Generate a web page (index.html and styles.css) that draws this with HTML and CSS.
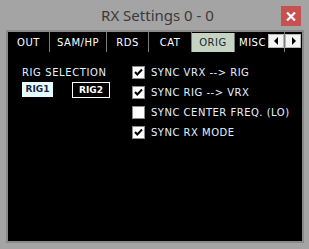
FILE: index.html
```html
<!DOCTYPE html>
<html>
<head>
    <title>RX Settings</title>
    <link rel="stylesheet" href="styles.css">
</head>
<body>
    <div class="window">
        <div class="titlebar">
            <span></span>
            <div class="title">RX Settings 0 - 0</div>
            <div class="close">
                <svg width="10" height="9" viewBox="0 0 10 9">
                    <path d="M1 0.5 L9 8.5 M9 0.5 L1 8.5" stroke="#fff" stroke-width="2.2"/>
                </svg>
            </div>
        </div>

        <div class="frame">
            <div class="tabs">
                <div class="tab t-out">OUT</div>
                <div class="tab t-sam">SAM/HP</div>
                <div class="tab t-rds">RDS</div>
                <div class="tab t-cat">CAT</div>
                <div class="tab t-orig active">ORIG</div>
                <div class="tab t-misc">MISC</div>

                <!-- tab scroll arrows -->
                <div class="scroller">
                    <div class="arrow">
                        <svg width="5" height="8" viewBox="0 0 5 8"><path d="M4 0 L0 4 L4 8 Z" fill="#000"/></svg>
                    </div>
                    <div class="arrow">
                        <svg width="5" height="8" viewBox="0 0 5 8"><path d="M1 0 L5 4 L1 8 Z" fill="#000"/></svg>
                    </div>
                </div>
            </div>

            <div class="panel">
                <div class="rig-col">
                    <div class="label">RIG SELECTION</div>
                    <div class="rigs">
                        <div class="rig on">RIG1</div>
                        <div class="rig">RIG2</div>
                    </div>
                </div>

                <ul class="syncs">
                    <li><span class="box checked"></span>SYNC VRX --&gt; RIG</li>
                    <li><span class="box checked"></span>SYNC RIG --&gt; VRX</li>
                    <li><span class="box"></span>SYNC CENTER FREQ. (LO)</li>
                    <li><span class="box checked"></span>SYNC RX MODE</li>
                </ul>
            </div>
        </div>
    </div>
</body>
</html>
```

FILE: styles.css
```css
body {
    margin: 0;
    padding: 0;
    background-color: #a4a4a4;
    font-family: "DejaVu Sans", Verdana, sans-serif;
}

.window {
    width: 309px;
    height: 249px;
    overflow: hidden;
}

.titlebar {
    height: 30px;
    display: grid;
    grid-template-columns: 1fr auto 1fr;
    align-items: start;
}

.title {
    font-family: "Noto Sans", "Open Sans", sans-serif;
    font-size: 15px;
    color: #3a3a3a;
    padding-top: 5px;
    padding-left: 6px;
}

.close {
    justify-self: end;
    width: 20px;
    height: 20px;
    margin-top: 6px;
    margin-right: 8px;
    background-color: #c75050;
    display: flex;
    justify-content: center;
    align-items: center;
}

.frame {
    margin-left: 6px;
    width: 294px;
    height: 209px;
    border: 2px solid #8a8a8a;
    background-color: #000;
}

.tabs {
    position: relative;
    display: flex;
    height: 20px;
    overflow: hidden;
}

.tab {
    flex: none;
    box-sizing: border-box;
    height: 20px;
    border-right: 1px solid #7c7c7c;
    color: #fff;
    font-size: 10px;
    letter-spacing: 0.5px;
    line-height: 21px;
    text-align: center;
}

.t-out { width: 42px; }
.t-sam { width: 57px; }
.t-rds { width: 42px; }
.t-cat { width: 43px; }
.t-orig { width: 43px; }
.t-misc { width: 50px; text-align: left; padding-left: 4px; }

.tab.active {
    background-color: #c3d4c3;
    color: #1e2430;
    margin-top: 1px;
    height: 19px;
    line-height: 19px;
}

.scroller {
    position: absolute;
    right: 1px;
    top: 2px;
    display: flex;
    gap: 1px;
}

.arrow {
    width: 14px;
    height: 12px;
    background-color: #f4f4f4;
    border: 1px solid #b8b8b8;
    display: flex;
    justify-content: center;
    align-items: center;
}

.panel {
    display: flex;
    padding: 14px 0 0 14px;
}

.rig-col {
    width: 110px;
}

.label {
    color: #e4f2ff;
    font-size: 10px;
    letter-spacing: 0.6px;
    line-height: 12px;
    margin-top: 1px;
}

.rigs {
    display: flex;
    align-items: flex-start;
    gap: 19px;
    margin-top: 3px;
}

.rig {
    box-sizing: border-box;
    width: 38px;
    height: 16px;
    font-size: 9px;
    font-weight: bold;
    line-height: 14px;
    text-align: center;
    color: #fff;
    border: 1px solid #fff;
}

.rig.on {
    width: 31px;
    height: 15px;
    line-height: 15px;
    border: none;
    background-color: #e6fdff;
    color: #1a2440;
}

.syncs {
    list-style: none;
    margin: 0;
    padding: 0;
    display: flex;
    flex-direction: column;
    gap: 7px;
}

.syncs li {
    display: flex;
    align-items: center;
    gap: 6px;
    height: 13px;
    color: #e4f2ff;
    font-size: 10px;
    letter-spacing: 0.5px;
}

.box {
    box-sizing: border-box;
    width: 13px;
    height: 13px;
    background-color: #fff;
    border: 1px solid #8c8c8c;
}

.box.checked {
    background: #fff url("data:image/svg+xml,%3Csvg xmlns='http://www.w3.org/2000/svg' width='11' height='11'%3E%3Cpath d='M2 5 L4.3 7.5 L9 2.5' fill='none' stroke='%23000' stroke-width='2'/%3E%3C/svg%3E") no-repeat center;
}
```
